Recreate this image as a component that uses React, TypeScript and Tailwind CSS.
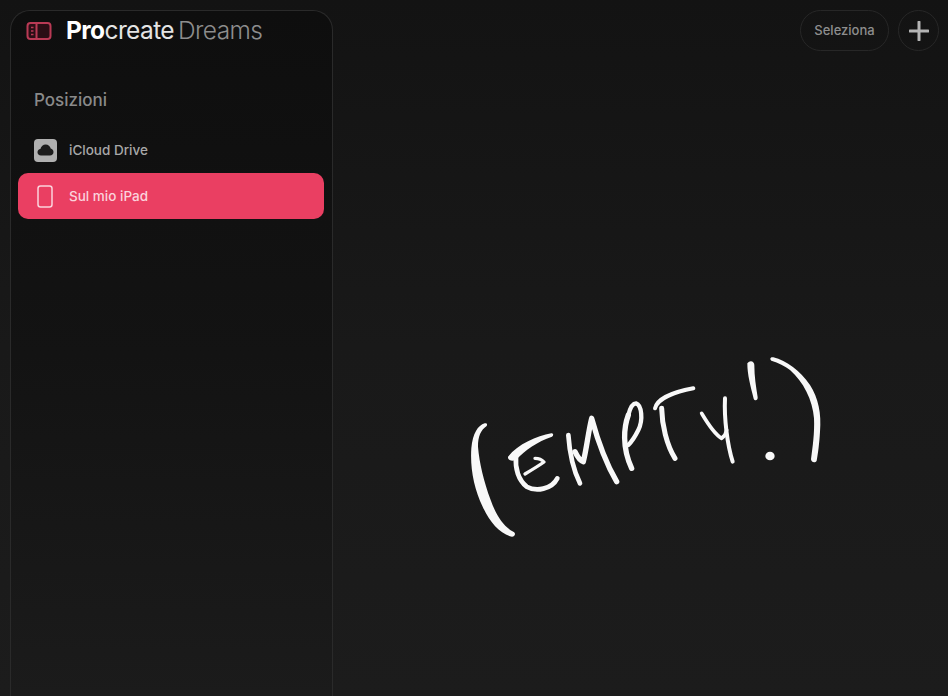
import React from "react";

const sans = { fontFamily: '"Inter", "Liberation Sans", sans-serif' };

function Scribble() {
  return (
    <svg width="390" height="210" viewBox="0 0 1170 630" fill="none" className="block">
      <g fill="#f8f8f8">
        <path d="M104 250 C84 256 68 280 64 325 C60 385 72 445 98 500 C120 548 150 582 186 590 C196 590 198 578 190 575 C160 560 138 525 122 480 C102 425 88 370 84 320 C84 290 92 270 110 258 C113 252 110 248 104 250Z" />
        <path d="M970 52 C1010 62 1050 92 1080 135 C1105 175 1115 220 1110 275 C1108 310 1104 340 1100 362 C1096 370 1084 368 1083 358 C1088 320 1094 280 1092 235 C1088 180 1060 125 1020 90 C1005 78 985 68 964 62 C958 56 962 50 970 52Z" />
        <path d="M892 70 C900 58 914 64 913 76 C913 110 918 140 923 172 C924 182 914 184 911 176 C902 140 892 105 892 70Z" />
        <ellipse cx="960" cy="348" rx="14" ry="13" />
        <path d="M304 280 C260 288 205 312 174 350 C172 362 190 366 200 358 C225 330 262 305 306 290 C312 286 310 280 304 280Z" />
      </g>
      <g stroke="#f8f8f8" strokeLinecap="round" strokeLinejoin="round" fill="none">
        <path d="M198 352 C195 385 205 420 230 440 C258 456 305 448 322 415" strokeWidth="14" />
        <path d="M225 402 C245 390 265 378 282 366 C275 358 265 355 255 355" strokeWidth="10" />
        <path d="M355 285 C358 330 370 390 390 430" strokeWidth="14" />
        <path d="M375 335 C382 350 390 362 400 365 C410 325 415 275 425 235 C440 290 465 365 500 425" strokeWidth="16" />
        <path d="M535 225 C522 260 515 320 545 385" strokeWidth="16" />
        <path d="M535 225 C540 205 548 190 558 190 C575 195 580 240 565 270 C555 290 545 305 535 315" strokeWidth="13" />
        <path d="M615 205 C622 175 675 155 730 145" strokeWidth="12" />
        <path d="M635 205 C636 255 650 315 675 355" strokeWidth="15" />
        <path d="M755 220 C770 245 790 280 815 295 C822 290 828 280 830 270" strokeWidth="11" />
        <path d="M825 175 C822 235 832 315 848 365" strokeWidth="12" />
      </g>
    </svg>
  );
}

function PanelIcon() {
  return (
    <svg width="26" height="22" viewBox="0 0 26 22" fill="none" className="block">
      <rect x="1.500" y="3" width="23" height="16" rx="3" fill="#2a0e15" stroke="#b93a55" strokeWidth="2" />
      <path d="M10.500 3v16" stroke="#b93a55" strokeWidth="2" />
      <path d="M5 7.500h2.500M5 11h2.500M5 14.500h2.500" stroke="#b93a55" strokeWidth="1.300" />
    </svg>
  );
}

function CloudIcon() {
  return (
    <div className="flex h-[23px] w-[23px] items-center justify-center rounded-[4px] bg-[#b0b0b0]">
      <svg width="17" height="12" viewBox="0 0 17 12" className="block">
        <path d="M4 11.500C1.800 11.500.5 10 .5 8.200c0-1.700 1.200-3 2.900-3.200C4 2.400 6.200.5 8.700.5c2.500 0 4.500 1.700 5 4 1.600.3 2.800 1.700 2.800 3.400 0 2-1.500 3.600-3.500 3.600H4Z" fill="#1d1d1d" />
      </svg>
    </div>
  );
}

function TabletIcon() {
  return (
    <svg width="16" height="23" viewBox="0 0 16 23" fill="none" className="block">
      <rect x="1" y="1" width="14" height="21" rx="2.500" stroke="#fbd3dc" strokeWidth="1.500" />
    </svg>
  );
}

export default function App() {
  return (
    <div className="flex h-[696px] w-[948px] overflow-hidden bg-gradient-to-b from-[#131313] via-[#191919] to-[#1c1c1c]" style={sans}>
      <aside className="ml-[10px] mt-[10px] flex h-[686px] w-[323px] shrink-0 flex-col rounded-t-[20px] border border-b-0 border-[#2a2a2a] bg-gradient-to-b from-[#0e0e0e] via-[#131313] to-[#1b1b1b]">
        <div className="flex h-[39px] items-center pl-[15px]">
          <PanelIcon />
          <div className="ml-[14px] text-[24.500px] leading-none tracking-[-0.6px]">
            <span className="font-bold text-white">Pro</span>
            <span className="text-[#e4e4e4]">create</span>
            <span className="ml-[4px] font-light text-[#8d8d8d]">Dreams</span>
          </div>
        </div>
        <h2 className="ml-[23px] mt-[39px] text-[17px] font-medium leading-[22px] text-[#8a8a8a]">Posizioni</h2>
        <nav className="ml-[7px] mr-[8px] mt-[17px] flex flex-col">
          <div className="flex h-[44px] items-center pl-[16px]">
            <CloudIcon />
            <span className="ml-[12px] text-[13.500px] font-medium text-[#a8a8a8]">iCloud Drive</span>
          </div>
          <div className="mt-[1px] flex h-[46px] items-center rounded-[10px] bg-[#ea3f62] pl-[19px]">
            <TabletIcon />
            <span className="ml-[16px] text-[13.500px] font-medium text-[#fbd3dc]">Sul mio iPad</span>
          </div>
        </nav>
      </aside>
      <main className="flex min-w-0 flex-1 flex-col">
        <header className="flex h-[52px] items-start justify-end gap-[9px] pr-[9px] pt-[10px]">
          <button className="flex h-[41px] w-[89px] items-center justify-center rounded-full border border-[#272727] text-[13px] font-medium text-[#8e8e8e]">Seleziona</button>
          <button className="flex h-[41px] w-[41px] items-center justify-center rounded-full border border-[#272727]">
            <svg width="20" height="20" viewBox="0 0 20 20" className="block">
              <path d="M10 1v18M1 10h18" stroke="#b4b4b4" strokeWidth="3" strokeLinecap="round" />
            </svg>
          </button>
        </header>
        <div className="ml-[117px] mt-[288px]">
          <Scribble />
        </div>
      </main>
    </div>
  );
}
